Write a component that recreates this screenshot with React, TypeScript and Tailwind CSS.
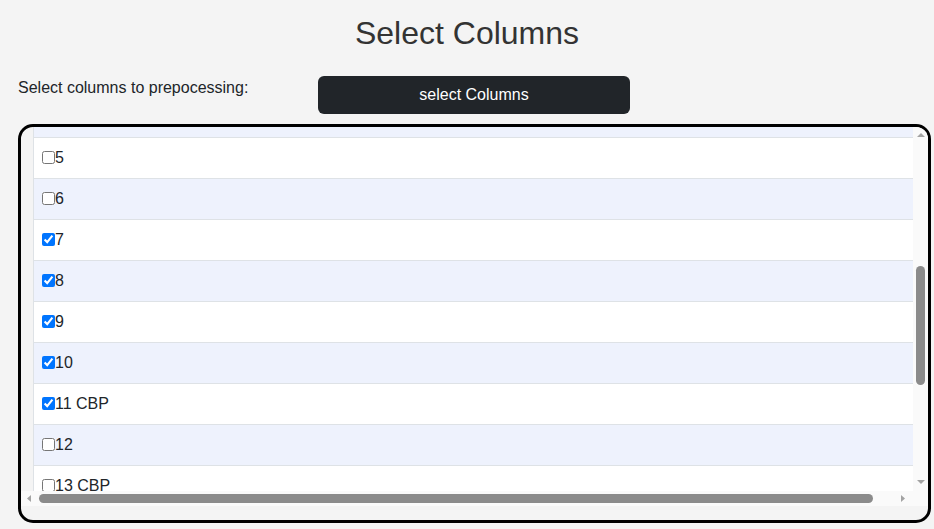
import React from 'react';

type Col = { label: string; checked: boolean };

const columns: Col[] = [
  { label: '5', checked: false },
  { label: '6', checked: false },
  { label: '7', checked: true },
  { label: '8', checked: true },
  { label: '9', checked: true },
  { label: '10', checked: true },
  { label: '11 CBP', checked: true },
  { label: '12', checked: false },
  { label: '13 CBP', checked: false },
];

const Arrow: React.FC<{ dir: 'up' | 'down' | 'left' | 'right' }> = ({ dir }) => {
  const pts = {
    up: '0,4 4,0 8,4',
    down: '0,0 8,0 4,4',
    left: '4,0 4,7 0,3.5',
    right: '0,0 0,7 4,3.5',
  }[dir];
  const vertical = dir === 'up' || dir === 'down';
  return (
    <svg width={vertical ? 8 : 4} height={vertical ? 4 : 7} viewBox={vertical ? '0 0 8 4' : '0 0 4 7'}>
      <polygon points={pts} fill="#a3a3a3" />
    </svg>
  );
};

export default function App() {
  return (
    <div className="min-h-screen bg-[#f4f4f4] font-['Liberation_Sans',Arial,sans-serif] text-[#212529]">
      <h1 className="pt-[14px] text-center text-[32px] leading-[38px] text-[#333]">Select Columns</h1>

      <div className="mt-[24px] flex items-start pl-[18px]">
        <label className="w-[300px] text-[16px] leading-[24px]">Select columns to prepocessing:</label>
        <button className="h-[38px] w-[312px] rounded-[6px] bg-[#212529] text-[16px] text-white">
          select Columns
        </button>
      </div>

      <div className="ml-[18px] mt-[10px] flex h-[399px] w-[913px] flex-col overflow-hidden rounded-[15px] border-[3px] border-black bg-[#f4f4f4]">
        <div className="flex h-[379px]">
          <div className="flex w-[892px] flex-col">
            {/* rows */}
            <div className="h-[364px] overflow-hidden pl-[12px]">
              <div className="w-[880px] border-l border-[#dee2e6]">
                <div className="h-[11px] border-b border-[#dee2e6] bg-[#eef2fd]" />
                {columns.map((c, i) => (
                  <div
                    key={c.label}
                    className={`flex h-[41px] items-center border-b border-[#dee2e6] px-[8px] text-[16px] ${
                      i % 2 === 0 ? 'bg-white' : 'bg-[#eef2fd]'
                    }`}
                  >
                    <input type="checkbox" defaultChecked={c.checked} className="mb-[2px] h-[13px] w-[13px]" />
                    <span className="leading-[24px]">{c.label}</span>
                  </div>
                ))}
              </div>
            </div>
            {/* horizontal scrollbar */}
            <div className="flex h-[15px] items-center bg-[#fafafa] pl-[6px] pr-[8px]">
              <Arrow dir="left" />
              <div className="ml-[8px] h-[9px] w-[834px] rounded-full bg-[#8b8b8b]" />
              <div className="flex-1" />
              <Arrow dir="right" />
            </div>
          </div>
          {/* vertical scrollbar */}
          <div className="flex w-[15px] flex-col bg-[#fafafa]">
            <div className="flex h-[364px] flex-col items-center">
              <div className="mt-[6px]">
                <Arrow dir="up" />
              </div>
              <div className="mt-[129px] h-[119px] w-[9px] rounded-full bg-[#8b8b8b]" />
              <div className="flex-1" />
              <div className="mb-[7px]">
                <Arrow dir="down" />
              </div>
            </div>
            <div className="h-[15px]" />
          </div>
        </div>
      </div>
    </div>
  );
}
